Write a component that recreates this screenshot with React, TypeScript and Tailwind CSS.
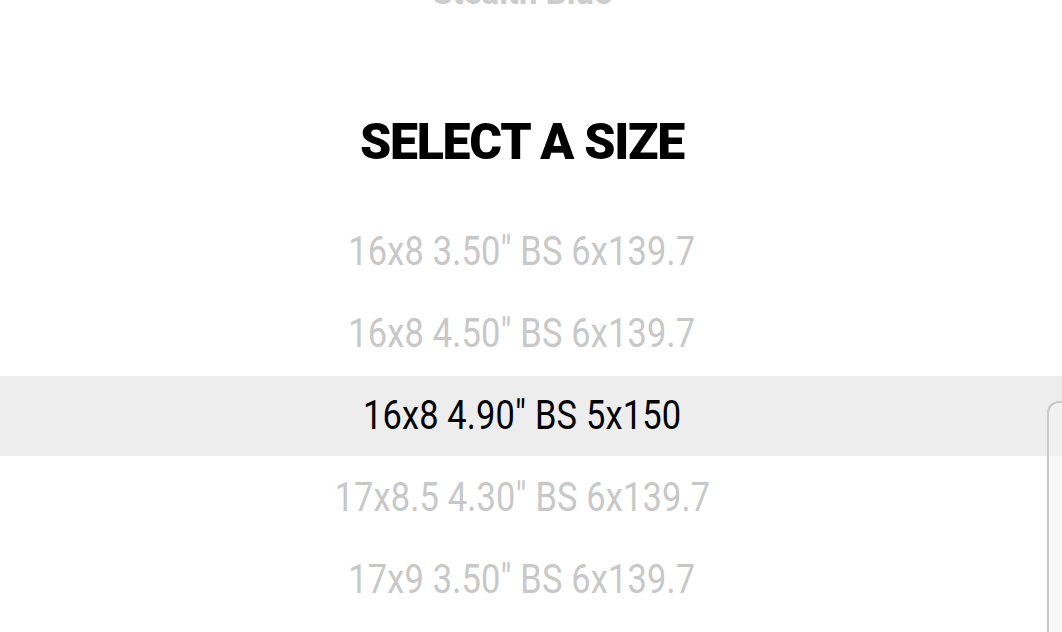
import { useState } from 'react';

const sizes = [
  '16x8 3.50" BS 6x139.7',
  '16x8 4.50" BS 6x139.7',
  '16x8 4.90" BS 5x150',
  '17x8.5 4.30" BS 6x139.7',
  '17x9 3.50" BS 6x139.7',
];

const SizePicker: React.FC = () => {
  const [selected, setSelected] = useState(2);

  return (
    <div className="relative w-[1062px] h-[632px] overflow-hidden bg-white font-['Roboto',sans-serif]">
      {/* previous step (colour list), scrolled mostly out of view */}
      <div className="h-[9px] overflow-hidden flex justify-center pr-[18px]">
        <div className="-mt-[24px] text-[33px] font-bold leading-[33px] text-[#cccccc]">Stealth Blue</div>
      </div>

      <h2 className="mt-[103px] pr-[18px] text-center text-[50px] leading-[60px] font-black tracking-[-0.025em] text-black">
        SELECT A SIZE
      </h2>

      <ul className="mt-[40px] flex flex-col gap-[2px]">
        {sizes.map((size, index) => (
          <li
            key={size}
            onClick={() => setSelected(index)}
            className={`h-[80px] pr-[18px] flex items-center justify-center cursor-pointer ${index === selected ? 'bg-[#ededed] text-black' : 'text-[#c8c8c8]'}`}
          >
            <span className="inline-block text-[40px] tracking-[0.005em] scale-x-[0.86]">{size}</span>
          </li>
        ))}
      </ul>

      {/* edge of the summary card peeking in from the right */}
      <div className="absolute left-[1047px] top-[401px] w-[60px] h-[260px] rounded-tl-[12px] border-l-2 border-t-2 border-[#c9c9c9] bg-[#f4f4f4]/60" />
    </div>
  );
};

export default function App() {
  return <SizePicker />;
}
